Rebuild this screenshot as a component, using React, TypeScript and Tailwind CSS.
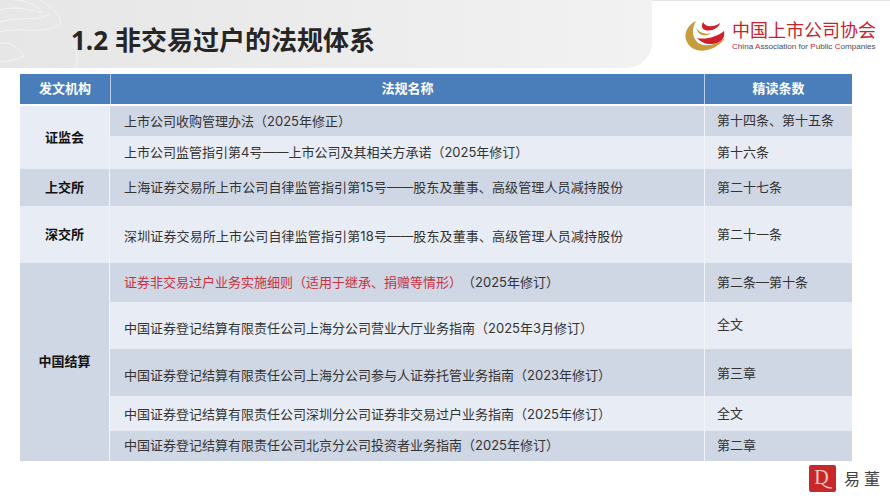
import React from 'react';

const cjk = "font-['Inter','Noto_Sans_CJK_SC',sans-serif]";

interface Row {
  name: string;
  clause: string;
  height: string;
  bg: string;
  namePad?: string;
  clausePad?: string;
  red?: boolean;
  suffix?: string;
}

interface Group {
  org: string;
  bg: string;
  rows: Row[];
}

const dark = 'bg-[#cfd6e4]';
const light = 'bg-[#e8ecf4]';

const groups: Group[] = [
  {
    org: '证监会',
    bg: light,
    rows: [
      { name: '上市公司收购管理办法（2025年修正）', clause: '第十四条、第十五条', height: 'h-[30px]', bg: dark, namePad: 'pt-[2px]' },
      { name: '上市公司监管指引第4号——上市公司及其相关方承诺（2025年修订）', clause: '第十六条', height: 'h-[33px]', bg: light },
    ],
  },
  {
    org: '上交所',
    bg: dark,
    rows: [
      { name: '上海证券交易所上市公司自律监管指引第15号——股东及董事、高级管理人员减持股份', clause: '第二十七条', height: 'h-[37px]', bg: dark, namePad: 'tracking-[0.13px]' },
    ],
  },
  {
    org: '深交所',
    bg: light,
    rows: [
      { name: '深圳证券交易所上市公司自律监管指引第18号——股东及董事、高级管理人员减持股份', clause: '第二十一条', height: 'h-[57px]', bg: light, namePad: 'pt-[4px] tracking-[0.13px]' },
    ],
  },
  {
    org: '中国结算',
    bg: dark,
    rows: [
      { name: '证券非交易过户业务实施细则（适用于继承、捐赠等情形）', suffix: '（2025年修订）', clause: '第二条—第十条', height: 'h-[39px]', bg: dark, red: true },
      { name: '中国证券登记结算有限责任公司上海分公司营业大厅业务指南（2025年3月修订）', clause: '全文', height: 'h-[47px]', bg: light, namePad: 'pt-[6px]', clausePad: 'pb-[2px]' },
      { name: '中国证券登记结算有限责任公司上海分公司参与人证券托管业务指南（2023年修订）', clause: '第三章', height: 'h-[47px]', bg: dark, namePad: 'pt-[6px]', clausePad: 'pt-[2px]' },
      { name: '中国证券登记结算有限责任公司深圳分公司证券非交易过户业务指南（2025年修订）', clause: '全文', height: 'h-[35px]', bg: light, namePad: 'pt-[2px]' },
      { name: '中国证券登记结算有限责任公司北京分公司投资者业务指南（2025年修订）', clause: '第二章', height: 'h-[30px]', bg: dark },
    ],
  },
];

const Logo = () => (
  <svg width="40" height="36" viewBox="0 0 40 36">
    <path d="M11 2 C2 6 -2 16 2 23 C6 31 15 33 22 31 C30 29 36 25 40 19 C34 24 26 27 19 26 C10 25 4 14 11 2 Z" fill="#c69c3e" />
    <path d="M11 9 C14 13 20 16 26 14 C20 19 13 16 11 9 Z" fill="#c69c3e" />
    <path d="M18 3 C20 8 28 9 35 4 C34 9 26 13 20 11 C17 10 16 7 18 3 Z" fill="#cf1f2a" />
    <path d="M12 19 C20 21 32 18 39 12 C40 17 38 21 34 23 C27 27 17 25 12 19 Z" fill="#cf1f2a" />
  </svg>
);

// faint contour lines in the corner of the title band
const TitleLines = () => (
  <svg className="absolute left-0 top-0" width="110" height="68" viewBox="0 0 110 68" fill="none" stroke="#f4f4f4" strokeWidth="1">
    <path d="M0 10 C20 4 38 14 42 12 C36 4 24 0 14 0" />
    <path d="M0 22 C18 16 38 22 50 14" />
    <path d="M0 32 C16 26 46 36 60 24 C62 14 48 4 40 0" />
    <path d="M0 44 C10 40 18 48 24 56 C16 60 6 62 0 62" />
    <path d="M76 68 C78 60 78 52 74 46" />
  </svg>
);

export default function App() {
  return (
    <div className={`${cjk} w-[890px] h-[500px] bg-white flex flex-col overflow-hidden`}>
      <div className="flex h-[68px] border-t border-[#e4e4e4]">
        <div className="relative -mt-px h-[68px] w-[652px] flex items-center pl-[71px] pt-[13px] rounded-br-[26px] bg-gradient-to-r from-[#e6e6e6] to-[#f2f2f2] text-[26px] font-bold text-[#262626] font-['Open_Sans','Noto_Sans_CJK_SC',sans-serif]">
          <TitleLines />
          <span className="relative">1.2 非交易过户的法规体系</span>
        </div>
        <div className="flex-1 flex items-start pl-[33px] pt-[18px] gap-[7px]">
          <Logo />
          <div className="flex flex-col">
            <div className="text-[18px] leading-[22px] mt-[1px] text-[#c8232c] font-['Liberation_Sans','Noto_Sans_CJK_SC',sans-serif] whitespace-nowrap">中国上市公司协会</div>
            <div className="text-[8.1px] leading-[9px] text-[#4a4a5a] whitespace-nowrap font-['Liberation_Sans',sans-serif]">
              <span className="text-[#c8232c]">C</span>hina <span className="text-[#c8232c]">A</span>ssociation for <span className="text-[#c8232c]">P</span>ublic <span className="text-[#c8232c]">C</span>ompanies
            </div>
          </div>
        </div>
      </div>
      <div className="ml-[20px] mt-[6px] w-[832px] text-[13px] text-[#333333]">
        <div className="flex h-[30px] bg-[#4a7ebb] text-white font-bold text-center items-center mb-[2px]">
          <div className="w-[90px]">发文机构</div>
          <div className="flex-1 border-x border-[#b9cde6] h-full flex items-center justify-center">法规名称</div>
          <div className="w-[147px]">精读条数</div>
        </div>
        {groups.map((group) => (
          <div key={group.org} className="flex">
            <div className={`w-[90px] ${group.bg} flex items-center justify-center font-bold text-[#111111] border-r border-[#f2f4f8]`}>
              {group.org}
            </div>
            <div className="flex-1 flex flex-col">
              {group.rows.map((row) => (
                <div key={row.name} className={`flex ${row.height} ${row.bg}`}>
                  <div className={`flex-1 flex items-center pl-[14px] border-r border-[#f2f4f8] whitespace-nowrap ${row.namePad ?? ''}`}>
                    <span className={row.red ? 'text-[#c8323f]' : ''}>{row.name}</span>
                    {row.suffix && <span>{row.suffix}</span>}
                  </div>
                  <div className={`w-[147px] flex items-center pl-[12px] ${row.clausePad ?? ''}`}>{row.clause}</div>
                </div>
              ))}
            </div>
          </div>
        ))}
      </div>
      <div className="flex justify-end items-center gap-[8px] pr-[10px] mt-[4px]">
        <div className="relative w-[27px] h-[27px] bg-[#c8282c] rounded-[2px] flex items-center justify-center text-[#f6c9c0] text-[20px] font-['Liberation_Serif',serif]">
          <span className="-mt-[3px] -ml-[2px]">D</span>
          <svg className="absolute left-0 top-0" width="27" height="27" viewBox="0 0 27 27" fill="none" stroke="#f6c9c0" strokeWidth="1.2">
            <path d="M13 19 C15 21 18 23 23 23" />
          </svg>
        </div>
        <div className="text-[16px] tracking-[4px] -mr-[4px] text-[#404040]">易董</div>
      </div>
    </div>
  );
}
